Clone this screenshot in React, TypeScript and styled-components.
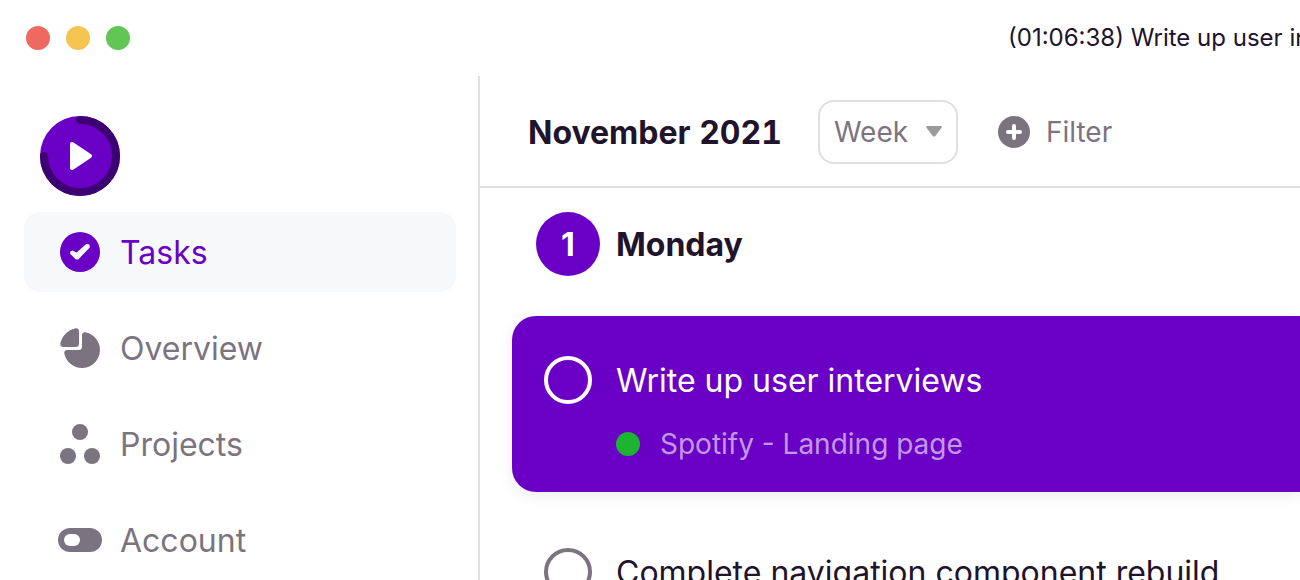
import React from 'react';
import styled, { createGlobalStyle } from 'styled-components';

const purple = '#6a00c5';
const deepPurple = '#3d0072';
const ink = '#20132b';
const muted = '#7b7480';
const line = '#e0e0e0';

const GlobalStyle = createGlobalStyle`
  *, *::before, *::after { box-sizing: border-box; }
  body {
    margin: 0;
    background: #fff;
    color: ${ink};
    font-family: Inter, "Liberation Sans", sans-serif;
    font-size: 32px;
    line-height: 39px;
  }
  button, input, select { margin: 0; font: inherit; color: inherit; }
  h1, h2, p, ul { margin: 0; padding: 0; font: inherit; }
  ul { list-style: none; }
`;

const Window = styled.div`
  display: flex;
  flex-direction: column;
  height: 100vh;
  overflow: hidden;
`;

const TitleBar = styled.header`
  display: flex;
  flex: none;
  align-items: center;
  justify-content: space-between;
  height: 76px;
  padding-left: 26px;
`;

const WindowControls = styled.div`
  display: flex;
  gap: 16px;
`;

const WindowControl = styled.button<{ $color: string }>`
  width: 24px;
  height: 24px;
  padding: 0;
  border: 0;
  border-radius: 50%;
  background: ${(p) => p.$color};
`;

const WindowTitle = styled.p`
  flex: 0 0 292px;
  overflow: hidden;
  font-size: 24px;
  line-height: 32px;
  white-space: nowrap;
`;

const Body = styled.div`
  display: flex;
  flex: 1;
  min-height: 0;
`;

const Sidebar = styled.aside`
  flex: 0 0 480px;
  padding: 40px 22px 0 24px;
  border-right: 2px solid ${line};
`;

const TimerButton = styled.button`
  display: block;
  margin: 0 16px 16px;
  padding: 0;
  border: 0;
  border-radius: 50%;
  background: none;

  svg { display: block; }
`;

const NavList = styled.ul`
  display: flex;
  flex-direction: column;
  gap: 16px;
`;

const NavLink = styled.a<{ $active?: boolean }>`
  display: flex;
  align-items: center;
  gap: 18px;
  height: 80px;
  padding: 0 34px;
  border-radius: 16px;
  background: ${(p) => (p.$active ? '#f7f8fa' : 'transparent')};
  color: ${(p) => (p.$active ? purple : muted)};
  text-decoration: none;

  svg { flex: none; }
`;

const Main = styled.main`
  flex: 1;
  min-width: 0;
  overflow: hidden;
`;

const Toolbar = styled.div`
  display: flex;
  align-items: center;
  padding: 24px 48px 22px;
  border-bottom: 2px solid ${line};
`;

const Month = styled.h1`
  margin-right: 36px;
  font-weight: 700;
  font-variant-numeric: tabular-nums;
  white-space: nowrap;
`;

const SelectBox = styled.div`
  position: relative;
  flex: none;
  margin-right: 40px;

  svg {
    position: absolute;
    top: 26px;
    right: 16px;
    pointer-events: none;
  }
`;

const RangeSelect = styled.select`
  display: block;
  width: 140px;
  height: 64px;
  padding: 0 14px;
  border: 2px solid ${line};
  border-radius: 16px;
  background: #fff;
  color: ${muted};
  font-size: 28px;
  line-height: 40px;
  appearance: none;
`;

const FilterButton = styled.button`
  display: flex;
  align-items: center;
  gap: 16px;
  padding: 0;
  border: 0;
  background: none;
  color: ${muted};
  font-size: 28px;
  line-height: 40px;
`;

const DayHeading = styled.h2`
  display: flex;
  align-items: center;
  gap: 16px;
  padding: 24px 56px 40px;
  font-weight: 700;
`;

const DayNumber = styled.span`
  display: grid;
  place-items: center;
  width: 64px;
  height: 64px;
  border-radius: 50%;
  background: ${purple};
  color: #fff;
`;

const TaskList = styled.ul`
  display: flex;
  flex-direction: column;
  gap: 16px;
  padding-left: 32px;
`;

const Task = styled.li<{ $active?: boolean }>`
  padding: 40px 32px 28px;
  border-radius: 24px 0 0 24px;
  background: ${(p) => (p.$active ? purple : 'transparent')};
  color: ${(p) => (p.$active ? '#fff' : ink)};
  box-shadow: ${(p) => (p.$active ? '0 4px 16px rgba(0, 0, 0, 0.08)' : 'none')};
`;

const TaskLabel = styled.label`
  display: flex;
  align-items: center;
  gap: 24px;
  white-space: nowrap;
`;

const TaskCheck = styled.input<{ $active?: boolean }>`
  flex: none;
  width: 48px;
  height: 48px;
  border: 4px solid ${(p) => (p.$active ? '#fff' : muted)};
  border-radius: 50%;
  appearance: none;
`;

const TaskProject = styled.p`
  display: flex;
  align-items: center;
  gap: 20px;
  margin-top: 20px;
  padding-left: 72px;
  color: rgba(255, 255, 255, 0.6);
  font-size: 28px;
  line-height: 40px;
`;

const ProjectDot = styled.span`
  width: 24px;
  height: 24px;
  border-radius: 50%;
  background: #1db431;
`;

const PlayIcon = () => (
  <svg width="80" height="80" viewBox="0 0 80 80" aria-hidden="true">
    <circle cx="40" cy="40" r="40" fill={purple} />
    <path d="M40 4A36 36 0 1 1 4 40" fill="none" stroke={deepPurple} strokeWidth="8" strokeLinecap="round" />
    <path d="M32 28L50 40L32 52Z" fill="#fff" stroke="#fff" strokeWidth="4" strokeLinejoin="round" />
  </svg>
);

const TasksIcon = () => (
  <svg width="44" height="40" viewBox="0 0 44 40" aria-hidden="true">
    <circle cx="22" cy="20" r="20" fill="currentColor" />
    <path
      d="M13.200 20.200L14.500 19.600L18.800 21.800L28.500 13.100L30.500 13.200L30.800 15L19.800 26.500L18.300 26.500L13.300 21.600Z"
      fill="#f7f8fa"
      stroke="#f7f8fa"
      strokeWidth="2"
      strokeLinejoin="round"
    />
  </svg>
);

const OverviewIcon = () => (
  <svg width="44" height="40" viewBox="0 0 44 40" aria-hidden="true" fill="currentColor">
    <path d="M17 .4C19.500 -.1 21 1.200 21 3.500V15.500Q21 19 17.500 19H5.500C3.200 19 1.800 17.500 2.400 15C4.200 7.500 9.500 2.100 17 .4Z" />
    <path d="M24 7.200Q24 4.200 27 4.200A18 18 0 1 1 6.200 25Q6.200 22 9.200 22H20.500Q24 22 24 18.500Z" />
  </svg>
);

const ProjectsIcon = () => (
  <svg width="44" height="40" viewBox="0 0 44 40" aria-hidden="true" fill="currentColor">
    <circle cx="22" cy="8" r="8" />
    <circle cx="10" cy="32" r="8" />
    <circle cx="34" cy="32" r="8" />
  </svg>
);

const AccountIcon = () => (
  <svg width="44" height="40" viewBox="0 0 44 40" aria-hidden="true">
    <rect y="8" width="44" height="24" rx="12" fill="currentColor" />
    <rect x="6" y="14" width="16" height="12" rx="6" fill="#fff" />
  </svg>
);

const CaretIcon = () => (
  <svg width="16" height="11" viewBox="0 0 16 11" aria-hidden="true">
    <path d="M1 0H15Q16.500 .3 15.500 1.800L9.300 10Q8 11.600 6.700 10L.5 1.800Q-.5 .3 1 0Z" fill="#9b9b9b" />
  </svg>
);

const PlusIcon = () => (
  <svg width="32" height="32" viewBox="0 0 32 32" aria-hidden="true">
    <circle cx="16" cy="16" r="16" fill="currentColor" />
    <path d="M16 10V22M10 16H22" stroke="#fff" strokeWidth="4" strokeLinecap="round" />
  </svg>
);

const navItems = [
  { label: 'Tasks', Icon: TasksIcon, active: true },
  { label: 'Overview', Icon: OverviewIcon },
  { label: 'Projects', Icon: ProjectsIcon },
  { label: 'Account', Icon: AccountIcon },
];

const tasks = [
  { title: 'Write up user interviews', project: 'Spotify - Landing page', active: true },
  { title: 'Complete navigation component rebuild' },
];

export default function App() {
  return (
    <>
      <GlobalStyle />
      <Window>
        <TitleBar>
          <WindowControls>
            <WindowControl $color="#ee695e" aria-label="Close" />
            <WindowControl $color="#f5c451" aria-label="Minimise" />
            <WindowControl $color="#62c655" aria-label="Zoom" />
          </WindowControls>
          <WindowTitle>(01:06:38) Write up user interviews</WindowTitle>
        </TitleBar>
        <Body>
          <Sidebar>
            <TimerButton aria-label="Start timer">
              <PlayIcon />
            </TimerButton>
            <nav>
              <NavList>
                {navItems.map(({ label, Icon, active }) => (
                  <li key={label}>
                    <NavLink href={`#${label.toLowerCase()}`} $active={active}>
                      <Icon />
                      {label}
                    </NavLink>
                  </li>
                ))}
              </NavList>
            </nav>
          </Sidebar>
          <Main>
            <Toolbar>
              <Month>November 2021</Month>
              <SelectBox>
                <RangeSelect aria-label="Range">
                  <option>Week</option>
                </RangeSelect>
                <CaretIcon />
              </SelectBox>
              <FilterButton>
                <PlusIcon />
                Filter
              </FilterButton>
            </Toolbar>
            <DayHeading>
              <DayNumber>1</DayNumber>
              Monday
            </DayHeading>
            <TaskList>
              {tasks.map(({ title, project, active }) => (
                <Task key={title} $active={active}>
                  <TaskLabel>
                    <TaskCheck type="checkbox" $active={active} />
                    {title}
                  </TaskLabel>
                  {project && (
                    <TaskProject>
                      <ProjectDot />
                      {project}
                    </TaskProject>
                  )}
                </Task>
              ))}
            </TaskList>
          </Main>
        </Body>
      </Window>
    </>
  );
}
